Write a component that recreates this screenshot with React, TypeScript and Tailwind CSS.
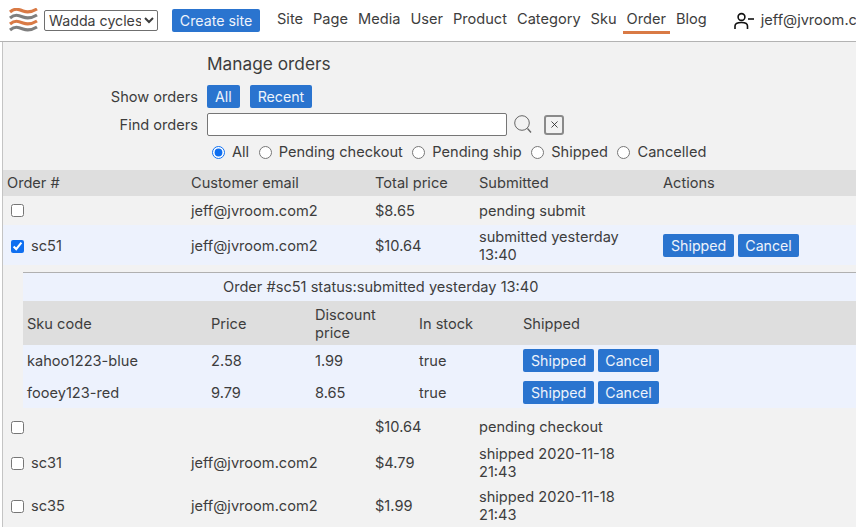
import { X } from "lucide-react";

const navItems = ["Site", "Page", "Media", "User", "Product", "Category", "Sku", "Order", "Blog"];

function Btn({ children }: { children: React.ReactNode }) {
  return <button className={`h-[23px] ${children === "Cancel" ? "px-[7px]" : "px-2"} rounded-[2px] bg-[#2a74cf] text-[#eef3fb] text-[14.2px] leading-[23px]`}>{children}</button>;
}

function Radio({ label, checked }: { label: string; checked?: boolean }) {
  return (
    <label className="flex items-center">
      <input type="radio" name="filter" defaultChecked={checked} className="w-[13px] h-[13px] m-0 mr-[7px] accent-[#0f6ff0]" />
      <span className="pt-[2px]">{label}</span>
    </label>
  );
}

function OrderRow({ id, email, price, status, blue, actions, h }: { id?: string; email?: string; price: string; status: string; blue?: boolean; actions?: boolean; h: string }) {
  return (
    <div className={`grid grid-cols-[188px_184px_104px_184px_1fr] items-center leading-[18px] ${h} ${blue ? "bg-[#edf2fd]" : ""}`}>
      <div className="pl-[8px] flex items-center">
        <input type="checkbox" defaultChecked={blue} className="w-[13px] h-[13px] m-0 mr-[7px] accent-[#0f6ff0]" />
        {id}
      </div>
      <div>{email}</div>
      <div>{price}</div>
      <div className="pr-4">{status}</div>
      {actions ? (
        <div className="flex gap-1 mt-[-2px]"><Btn>Shipped</Btn><Btn>Cancel</Btn></div>
      ) : <div />}
    </div>
  );
}

function SkuRow({ sku, price, discount, h }: { sku: string; price: string; discount: string; h: string }) {
  return (
    <div className={`grid grid-cols-[184px_104px_104px_104px_1fr] items-center leading-[18px] pl-1 ${h} bg-[#edf2fd]`}>
      <div>{sku}</div>
      <div>{price}</div>
      <div>{discount}</div>
      <div>true</div>
      <div className="flex gap-1 mt-[-1px]"><Btn>Shipped</Btn><Btn>Cancel</Btn></div>
    </div>
  );
}

export default function App() {
  return (
    <div className="h-[527px] w-[856px] overflow-hidden bg-white text-[14.6px] text-[#3d3d3d]" style={{ fontFamily: "Inter, sans-serif" }}>
      {/* top bar */}
      <div className="h-[42px] border-b border-[#b3b3b3] flex items-center relative">
        <svg className="ml-[9px] mr-[6px] shrink-0 mt-[-1px]" width="29" height="25" viewBox="0 0 29 25" fill="none" strokeWidth="3.2">
          <path d="M1 4 C6 0 9 1 14 3 C19 5 23 4 28 1" stroke="#d97a45" />
          <path d="M1 10 C6 6 9 7 14 9 C19 11 23 10 28 7" stroke="#7f7f7f" />
          <path d="M1 16 C6 12 9 13 14 15 C19 17 23 16 28 13" stroke="#d97a45" />
          <path d="M1 22 C6 18 9 19 14 21 C19 23 23 22 28 19" stroke="#7f7f7f" />
        </svg>
        <select className="shrink-0 w-[114px] h-[21px] border border-[#6f6f6f] rounded-[2px] bg-white pl-0 text-[14.2px] text-[#3d3d3d]">
          <option>Wadda cycles</option>
        </select>
        <button className="shrink-0 ml-[14px] h-[23px] w-[88px] rounded-[2px] bg-[#2a74cf] text-[#eef3fb] whitespace-nowrap text-[14.2px]">Create site</button>
        <nav className="flex shrink-0 ml-[13px] gap-[2px]">
          {navItems.map((n) => (
            <a key={n} className={`px-[4px] h-[26px] leading-[23px] ${n === "Order" ? "border-b-[3px] border-[#d97a45]" : ""}`}>{n}</a>
          ))}
        </nav>
        <svg className="ml-[23px] shrink-0" width="22" height="20" viewBox="0 0 22 20" fill="none" stroke="#111" strokeWidth="1.6">
          <circle cx="7.5" cy="6" r="3.4" />
          <path d="M1 18 V15 C1 12.5 3.5 11.5 7.5 11.5 C11.5 11.5 13.5 12.5 13.5 15 V18" />
          <path d="M14 8 H20" />
        </svg>
        <span className="ml-[5px] whitespace-nowrap">jeff@jvroom.com2</span>
      </div>

      {/* page */}
      <div className="ml-[2px] border-l border-[#c4c4c4] bg-[#f2f2f2] h-[485px] overflow-hidden">
        <div className="pl-[204px] pt-[11px] text-[17.3px] leading-[22px]">Manage orders</div>
        <div className="flex items-center mt-[10px] h-[23px]">
          <div className="w-[195px] text-right pt-[2px]">Show orders</div>
          <div className="ml-[9px] flex gap-[10px]"><Btn>All</Btn><Btn>Recent</Btn></div>
        </div>
        <div className="flex items-center mt-[5px] h-[23px]">
          <div className="w-[195px] text-right pt-[2px]">Find orders</div>
          <input className="ml-[9px] w-[300px] h-[23px] border border-[#767676] rounded-[2px] bg-white" />
          <svg className="ml-[7px] shrink-0" width="18" height="19" viewBox="0 0 18 19" fill="none" stroke="#666" strokeWidth="1">
            <circle cx="8" cy="8" r="7.3" />
            <path d="M13.5 13.5 L17 17.5" strokeWidth="1.4" />
          </svg>
          <span className="ml-[12px] w-[20px] h-[20px] border-2 border-[#8a8a8a] rounded-[3px] flex items-center justify-center">
            <X size={11} strokeWidth={1.8} color="#222" />
          </span>
        </div>
        <div className="flex items-center gap-[9.5px] pl-[209px] mt-[5px] h-[22px]">
          <Radio label="All" checked />
          <Radio label="Pending checkout" />
          <Radio label="Pending ship" />
          <Radio label="Shipped" />
          <Radio label="Cancelled" />
        </div>

        {/* orders header */}
        <div className="mt-[7px] grid grid-cols-[188px_184px_104px_184px_1fr] items-center h-[26px] bg-[#dedede] pt-[1px]">
          <div className="pl-[4px]">Order #</div>
          <div>Customer email</div>
          <div>Total price</div>
          <div>Submitted</div>
          <div>Actions</div>
        </div>
        <OrderRow h="h-[29px]" email="jeff@jvroom.com2" price="$8.65" status="pending submit" />
        <OrderRow h="h-[40px] pt-[2px]" blue id="sc51" email="jeff@jvroom.com2" price="$10.64" status="submitted yesterday 13:40" actions />

        {/* expanded order */}
        <div className="pl-[20px] mt-[7px]">
          <div className="border-t border-[#b0b0b0] bg-[#edf2fd] h-[29px] leading-[29px] pl-[200px]">Order #sc51 status:submitted yesterday 13:40</div>
          <div className="grid grid-cols-[184px_104px_104px_104px_1fr] items-center h-[44px] bg-[#dedede] pl-1 pt-[1px] leading-[18px]">
            <div>Sku code</div>
            <div>Price</div>
            <div className="pr-8">Discount price</div>
            <div>In stock</div>
            <div>Shipped</div>
          </div>
          <SkuRow h="h-[32px]" sku="kahoo1223-blue" price="2.58" discount="1.99" />
          <SkuRow h="h-[31px]" sku="fooey123-red" price="9.79" discount="8.65" />
        </div>

        <OrderRow h="h-[34px] pt-[4px]" price="$10.64" status="pending checkout" />
        <OrderRow h="h-[42px]" id="sc31" email="jeff@jvroom.com2" price="$4.79" status="shipped 2020-11-18 21:43" />
        <OrderRow h="h-[44px]" id="sc35" email="jeff@jvroom.com2" price="$1.99" status="shipped 2020-11-18 21:43" />
      </div>
    </div>
  );
}
